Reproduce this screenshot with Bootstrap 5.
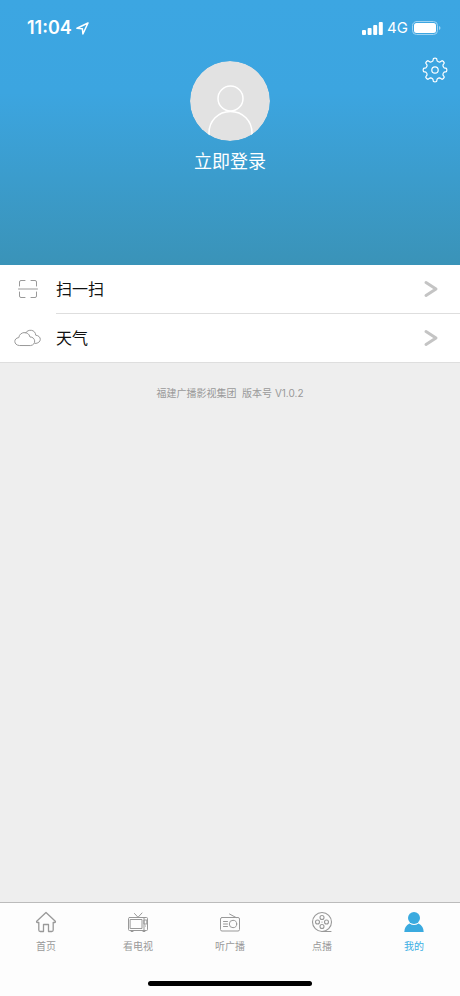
<!DOCTYPE html>
<html lang="zh-CN">
<head>
<meta charset="utf-8">
<meta name="viewport" content="width=device-width, initial-scale=1">
<title>我的</title>
<link href="https://cdn.jsdelivr.net/npm/bootstrap@5.3.0/dist/css/bootstrap.min.css" rel="stylesheet">
<style>
body{background:#eee;font-family:Inter,"Noto Sans CJK SC",sans-serif;}
svg{display:block;fill:none;stroke-linecap:round;stroke-linejoin:round;flex:none}
.profile-head{background:linear-gradient(#3ca6e2 0%,#3ca5e0 35%,#3a93b8 100%);color:#fff;padding-bottom:91px}
.status-bar{height:56px;padding:0 19px 0 27px;line-height:24px}
.clock{font-size:18px;font-weight:600}
.network{font-size:15px}
.profile-row{display:grid;grid-template-columns:1fr auto 1fr;padding:0 12px}
.gear-btn{justify-self:end;align-self:start;margin-top:1px}
.avatar{margin-top:5px}
.login-name{font-size:18px;line-height:24px;margin-top:9px}
.menu-row{padding-left:14px;color:#111;height:48px}
.menu-icon{width:28px;margin-right:14px}
.menu-label{font-size:16px;padding-right:21px;line-height:24px}
.menu-row + .menu-row .menu-label{border-top:1px solid #dedede}
.menu-row + .menu-row{height:49px}
.menu{border-bottom:1px solid #dedede}
.version{font-size:10px;line-height:16px;color:#999;margin-top:22px;white-space:pre}
.tab-bar{background:#fdfdfd;border-top:1px solid #bbb;padding-top:7px}
.tab-item{color:#999;font-size:10px;line-height:16px;gap:4px}
.tab-item.active{color:#3aaee4}
.home-bar{width:164px;height:5px;background:#000;margin:27px auto 10px}
</style>
<script src="https://cdn.jsdelivr.net/npm/bootstrap@5.3.0/dist/js/bootstrap.bundle.min.js"></script>
</head>
<body class="d-flex flex-column min-vh-100">
<header class="profile-head">
  <div class="status-bar d-flex align-items-center justify-content-between">
    <div class="d-flex align-items-center gap-1">
      <span class="clock">11:04</span>
      <svg width="13" height="13" viewBox="0 0 13 13" stroke="#fff" stroke-width="1.5" aria-hidden="true"><path d="M12 1 1 6.300l5.400.4.5 5.300z"/></svg>
    </div>
    <div class="d-flex align-items-center gap-1">
      <svg width="21" height="13" viewBox="0 0 21 13" aria-hidden="true"><g fill="#fff"><rect y="8" width="4" height="5" rx="1"/><rect x="5.600" y="6" width="4" height="7" rx="1"/><rect x="11.200" y="3" width="4" height="10" rx="1"/><rect x="16.800" width="4" height="13" rx="1"/></g></svg>
      <span class="network">4G</span>
      <svg width="29" height="14" viewBox="0 0 29 14" aria-hidden="true"><rect x=".5" y=".5" width="25" height="13" rx="4" stroke="#9ed3f2"/><rect x="2" y="2" width="22" height="10" rx="2.500" fill="#fff"/><path d="M27 5c2 .7 2 3.300 0 4z" fill="#9ed3f2"/></svg>
    </div>
  </div>
  <div class="profile-row">
    <span></span>
    <div class="d-flex flex-column align-items-center">
      <svg class="avatar rounded-circle" width="80" height="80" viewBox="0 0 80 80" stroke="#fff" stroke-width="1.500" aria-hidden="true"><circle cx="40" cy="40" r="40" fill="#e2e2e2" stroke="none"/><circle cx="40.500" cy="37.500" r="12.500"/><path d="M19 76v-4c0-12 9-21.500 21.500-21.500S62 60 62 72v4"/></svg>
      <button class="login-name btn p-0 border-0 text-white" type="button">立即登录</button>
    </div>
    <button class="gear-btn btn p-0 border-0" type="button" aria-label="设置">
      <svg width="26" height="26" viewBox="0 0 26 26" stroke="#fff" stroke-width="1.200"><path d="M10.900 3.900 11.400 1.500Q13 .7 14.600 1.500L15.100 3.900Q16.300 5.200 17.950 5.100L20 3.700Q21.800 4.200 22.300 6L20.900 8.050Q20.800 9.700 22.100 10.900L24.500 11.400Q25.300 13 24.500 14.600L22.100 15.100Q20.800 16.300 20.900 17.950L22.300 20Q21.800 21.800 20 22.300L17.950 20.900Q16.300 20.800 15.100 22.100L14.600 24.500Q13 25.300 11.400 24.500L10.900 22.100Q9.700 20.800 8.050 20.900L6 22.300Q4.200 21.800 3.700 20L5.100 17.950Q5.200 16.300 3.900 15.100L1.500 14.600Q.7 13 1.500 11.400L3.900 10.900Q5.200 9.700 5.100 8.050L3.700 6Q4.200 4.200 6 3.700L8.050 5.100Q9.700 5.200 10.900 3.900Z"/><circle cx="13" cy="13" r="3.200"/></svg>
    </button>
  </div>
</header>
<main class="flex-grow-1">
  <nav class="menu bg-white">
    <a href="#scan" class="menu-row d-flex text-decoration-none">
      <span class="menu-icon d-flex align-items-center justify-content-center"><svg width="20" height="20" viewBox="0 0 20 20" stroke="#999"><path d="M1.500 7V3q0-1.500 1.500-1.500h4M13 1.500h4q1.500 0 1.500 1.500v4M.5 10h19M1.500 13v4q0 1.500 1.500 1.500h4M13 18.500h4q1.500 0 1.500-1.500v-4"/></svg></span>
      <span class="menu-label flex-grow-1 d-flex align-items-center justify-content-between">扫一扫
        <svg width="16" height="18" viewBox="0 0 16 18" stroke="#c4c4c4" stroke-width="3"><path d="m3 2.500 10 6.500-10 6.500"/></svg></span>
    </a>
    <a href="#weather" class="menu-row d-flex text-decoration-none">
      <span class="menu-icon d-flex align-items-center justify-content-center"><svg width="28" height="18" viewBox="0 0 28 18" stroke="#999"><path d="M5 16.500c-5.500-.4-5.700-7.400-.2-7.900C5.500 2.500 14.500 1.500 16 8c5.500-.3 6.700 7.700 1 8.500zM11.500 4C14-.5 21.500.5 21.700 6.200c6.300.6 6.300 8.300-.7 8.300"/></svg></span>
      <span class="menu-label flex-grow-1 d-flex align-items-center justify-content-between">天气
        <svg width="16" height="18" viewBox="0 0 16 18" stroke="#c4c4c4" stroke-width="3"><path d="m3 2.500 10 6.500-10 6.500"/></svg></span>
    </a>
  </nav>
  <p class="version text-center mb-0">福建广播影视集团  版本号 V1.0.2</p>
</main>
<footer class="tab-bar">
  <nav class="d-flex">
    <a href="#home" class="tab-item col d-flex flex-column align-items-center text-decoration-none">
      <svg width="24" height="24" viewBox="0 0 24 24" stroke="#999" stroke-width="1.300"><path d="M12 2.500 2.700 11.200q-.5 1.300.8 1.300h1.300v7.500q0 1.500 1.500 1.500h3.200v-7h5v7h3.200q1.500 0 1.500-1.500v-7.500h1.300q1.300 0 .8-1.300z"/></svg>首页</a>
    <a href="#tv" class="tab-item col d-flex flex-column align-items-center text-decoration-none">
      <svg width="24" height="24" viewBox="0 0 24 24" stroke="#999"><rect x="2.500" y="7.500" width="19" height="13" rx="1"/><rect x="4.500" y="9.500" width="11.500" height="9"/><path d="M8.500 3.500 12 7.300l4-4.300M5 20.500v1h2M17 21.500h2v-1M18 8v12M18.300 10h2.500v4h-2.500zM19.500 16v.1"/></svg>看电视</a>
    <a href="#radio" class="tab-item col d-flex flex-column align-items-center text-decoration-none">
      <svg width="24" height="24" viewBox="0 0 24 24" stroke="#999"><rect x="2.500" y="7.500" width="19" height="13.500" rx="1.500"/><circle cx="15" cy="14" r="3.700"/><path d="M18 7.500 11.500 4M5.500 11.500h4M5.500 14h4M5.500 16.500h4"/></svg>听广播</a>
    <a href="#vod" class="tab-item col d-flex flex-column align-items-center text-decoration-none">
      <svg width="24" height="24" viewBox="0 0 24 24" stroke="#999" stroke-width="1.100"><circle cx="12" cy="12" r="9.500"/><circle cx="12" cy="7.500" r="2"/><circle cx="7.500" cy="12" r="2"/><circle cx="16.500" cy="12" r="2"/><circle cx="12" cy="16.500" r="2"/><path d="M12 21.500h9M12 12v.1"/></svg>点播</a>
    <a href="#me" class="tab-item active col d-flex flex-column align-items-center text-decoration-none" aria-current="page">
      <svg width="24" height="24" viewBox="0 0 24 24"><g fill="#3aaadf"><circle cx="12" cy="8" r="6"/><path d="M2.300 22q0-6 5.200-8.600Q12 16.500 16.500 13.400 21.700 16 21.700 22z"/></g></svg>我的</a>
  </nav>
  <div class="home-bar rounded-pill"></div>
</footer>
</body>
</html>
